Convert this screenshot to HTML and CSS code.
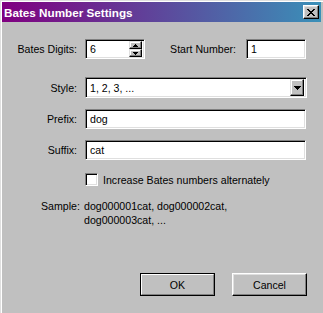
FILE: index.html
```html
<!DOCTYPE html>
<html>
<head>
<meta charset="utf-8">
<link rel="stylesheet" href="styles.css">
</head>
<body>
<div class="window">
  <div class="titlebar">
    <span class="title">Bates Number Settings</span>
    <div class="close">
      <svg width="8" height="7" viewBox="0 0 8 7" shape-rendering="crispEdges">
        <rect x="0" y="0" width="2" height="1"/><rect x="6" y="0" width="2" height="1"/>
        <rect x="1" y="1" width="2" height="1"/><rect x="5" y="1" width="2" height="1"/>
        <rect x="2" y="2" width="4" height="1"/>
        <rect x="3" y="3" width="2" height="1"/>
        <rect x="2" y="4" width="4" height="1"/>
        <rect x="1" y="5" width="2" height="1"/><rect x="5" y="5" width="2" height="1"/>
        <rect x="0" y="6" width="2" height="1"/><rect x="6" y="6" width="2" height="1"/>
      </svg>
    </div>
  </div>
  <div class="form">
    <div class="row row-digits">
      <span class="label">Bates Digits:</span>
      <div class="field spin">
        <span class="value">6</span>
        <div class="spin-buttons">
          <div class="spin-btn"><svg width="5" height="3" viewBox="0 0 5 3" shape-rendering="crispEdges"><path d="M2 0h1v1h1v1h1v1H0V2h1V1h1z"/></svg></div>
          <div class="spin-btn"><svg width="5" height="3" viewBox="0 0 5 3" shape-rendering="crispEdges"><path d="M0 0h5v1H4v1H3v1H2V2H1V1H0z"/></svg></div>
        </div>
      </div>
      <span class="label2">Start Number:</span>
      <div class="field start"><span class="value">1</span></div>
    </div>
    <div class="row row-style">
      <span class="label">Style:</span>
      <div class="field select">
        <span class="value">1, 2, 3, ...</span>
        <div class="drop-btn"><svg width="7" height="4" viewBox="0 0 7 4" shape-rendering="crispEdges"><path d="M0 0h7v1H6v1H5v1H4v1H3V3H2V2H1V1H0z"/></svg></div>
      </div>
    </div>
    <div class="row row-prefix">
      <span class="label">Prefix:</span>
      <div class="field text"><span class="value">dog</span></div>
    </div>
    <div class="row row-suffix">
      <span class="label">Suffix:</span>
      <div class="field text"><span class="value">cat</span></div>
    </div>
    <div class="row row-check">
      <div class="checkbox"></div>
      <span class="check-label">Increase Bates numbers alternately</span>
    </div>
    <div class="sample">
      <span class="sample-label">Sample:</span>
      <span class="sample-text">dog000001cat, dog000002cat,<br>dog000003cat, ...</span>
    </div>
    <div class="buttons">
      <div class="btn default"><span class="btn-inner">OK</span></div>
      <div class="btn"><span class="btn-inner">Cancel</span></div>
    </div>
  </div>
</div>
</body>
</html>
```
FILE: styles.css
```css
body {
  margin: 0;
  background: #c0c0c0;
  font-family: "Liberation Sans", Arial, sans-serif;
  font-size: 10.6px;
  color: #000;
}
.window {
  width: 323px;
  height: 313px;
  box-sizing: border-box;
  border-top: 1px solid #dfdfdf;
  border-left: 1px solid #dfdfdf;
  box-shadow: inset 1px 1px #fff;
  padding: 1px 2px 0 1px;
  background: #c0c0c0;
}
.titlebar {
  height: 20px;
  display: flex;
  align-items: center;
  justify-content: space-between;
  padding: 0 2px 0 2px;
  background: linear-gradient(to right, #800080, #3a90b8);
}
.title {
  color: #fff;
  font-weight: bold;
  font-size: 11.7px;
}
.close {
  width: 16px;
  height: 14px;
  box-sizing: border-box;
  background: #c0c0c0;
  border-top: 1px solid #fff;
  border-left: 1px solid #fff;
  border-right: 1px solid #000;
  border-bottom: 1px solid #000;
  box-shadow: inset -1px -1px #808080, inset 1px 1px #dfdfdf;
  display: flex;
  align-items: center;
  justify-content: center;
}
.close svg { fill: #000; }
.form {
  padding: 17px 14px 0 0;
  display: flex;
  flex-direction: column;
}
.row {
  display: flex;
  align-items: center;
}
.label {
  width: 75px;
  text-align: right;
  margin-right: 8px;
  flex: none;
}
.field {
  box-sizing: border-box;
  background: #fff;
  border: 1px solid;
  border-color: #808080 #fff #fff #808080;
  box-shadow: inset 1px 1px #000, inset -1px -1px #dfdfdf;
  display: flex;
  align-items: center;
  padding-left: 3px;
}
.value {
  padding-left: 1px;
}
.row-digits { height: 20px; }
.spin {
  width: 60px;
  height: 20px;
  padding-right: 2px;
  justify-content: space-between;
}
.spin-buttons {
  display: flex;
  flex-direction: column;
  width: 13px;
  height: 16px;
}
.spin-btn, .drop-btn {
  box-sizing: border-box;
  background: #c0c0c0;
  border-top: 1px solid #dfdfdf;
  border-left: 1px solid #dfdfdf;
  border-right: 1px solid #000;
  border-bottom: 1px solid #000;
  box-shadow: inset -1px -1px #808080, inset 1px 1px #fff;
  display: flex;
  align-items: center;
  justify-content: center;
}
.spin-btn { height: 8px; }
.spin-btn svg, .drop-btn svg { fill: #000; }
.label2 {
  flex: 1;
  text-align: right;
  margin-right: 10px;
}
.start {
  width: 60px;
  height: 20px;
  margin-right: 1px;
}
.row-style { margin-top: 18px; }
.select {
  flex: 1;
  height: 21px;
  padding-right: 2px;
  justify-content: space-between;
}
.drop-btn {
  width: 14px;
  height: 17px;
}
.row-prefix { margin-top: 11px; }
.row-suffix { margin-top: 11px; }
.text {
  flex: 1;
  height: 20px;
  margin-right: 1px;
}
.row-check {
  margin-top: 13px;
  padding-left: 83px;
  height: 13px;
}
.checkbox {
  width: 13px;
  height: 13px;
  box-sizing: border-box;
  background: #fff;
  border: 1px solid;
  border-color: #808080 #fff #fff #808080;
  box-shadow: inset 1px 1px #000, inset -1px -1px #dfdfdf;
  margin-right: 5px;
}
.sample {
  display: flex;
  margin-top: 13px;
  padding-left: 39px;
  line-height: 14px;
}
.sample-label {
  width: 43px;
  flex: none;
}
.buttons {
  display: flex;
  justify-content: flex-end;
  gap: 17px;
  margin-top: 46px;
}
.btn {
  width: 75px;
  height: 23px;
  box-sizing: border-box;
  background: #c0c0c0;
  border-top: 1px solid #fff;
  border-left: 1px solid #fff;
  border-right: 1px solid #000;
  border-bottom: 1px solid #000;
  box-shadow: inset -1px -1px #808080, inset 1px 1px #dfdfdf;
  display: flex;
}
.btn-inner {
  flex: 1;
  display: flex;
  align-items: center;
  justify-content: center;
}
.btn.default {
  border: 1px solid #000;
  box-shadow: none;
}
.btn.default .btn-inner {
  border-top: 1px solid #fff;
  border-left: 1px solid #fff;
  border-right: 1px solid #808080;
  border-bottom: 1px solid #808080;
}
```
